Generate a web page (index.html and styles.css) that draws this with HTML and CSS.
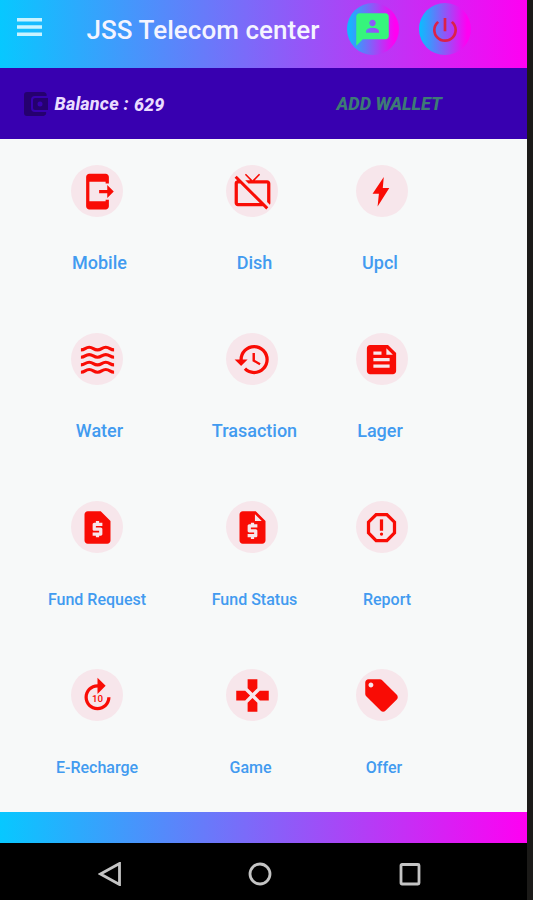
FILE: index.html
```html
<!DOCTYPE html>
<html lang="en">
<head>
    <meta charset="UTF-8">
    <meta name="viewport" content="width=device-width, initial-scale=1.0">
    <title>JSS Telecom center</title>
    <link rel="stylesheet" href="styles.css">
</head>
<body>
    <div class="screen">
        <header class="app-bar">
            <svg class="menu-icon" viewBox="0 0 25 20"><path d="M0 1h25v3.500H0zM0 8.200h25v3.500H0zM0 15.500h25v3.500H0z"/></svg>
            <h1 class="app-title">JSS Telecom center</h1>
            <a class="round-btn contact" href="#">
                <svg viewBox="0 0 24 24"><path d="M20 2H4.01c-1.1 0-2 .9-2 2L2 22l4-4h14c1.1 0 2-.9 2-2V4c0-1.1-.9-2-2-2zm-8 4c1.1 0 2 .9 2 2s-.9 2-2 2-2-.9-2-2 .9-2 2-2zm4 8H8v-.57c0-.81.48-1.53 1.22-1.85a6.95 6.95 0 0 1 5.56 0A2.01 2.01 0 0 1 16 13.43V14z"/></svg>
            </a>
            <a class="round-btn power" href="#">
                <svg viewBox="0 0 24 24"><path d="M13 3h-2v10h2V3zm4.83 2.17-1.42 1.42A6.92 6.92 0 0 1 19 12a7 7 0 1 1-11.42-5.42L6.17 5.17A8.932 8.932 0 0 0 3 12a9 9 0 0 0 18 0c0-2.74-1.23-5.18-3.17-6.83z"/></svg>
            </a>
        </header>

        <div class="balance-bar">
            <svg class="wallet-icon" viewBox="0 0 24 24"><path d="M18 24H3a3 3 0 0 1-3-3V3a3 3 0 0 1 3-3h17a3 3 0 0 1 2.500 4H11a4 4 0 0 0-4 4v8a4 4 0 0 0 4 4h11a3 3 0 0 1-3 4zM11 6h13v12H11a2 2 0 0 1-2-2V8a2 2 0 0 1 2-2zm5 3.500a2.500 2.500 0 1 0 0 5 2.500 2.500 0 0 0 0-5z"/></svg>
            <span class="balance-label">Balance :</span>
            <span class="balance-value">629</span>
            <a class="add-wallet" href="#">ADD WALLET</a>
        </div>

        <main class="services">
            <div class="service">
                <div class="service-icon"><svg viewBox="0 0 24 24"><path d="M17 17h2v4c0 1.100-.9 2-2 2H7c-1.100 0-2-.9-2-2V3c0-1.100.9-2 2-2h10c1.100 0 2 .9 2 2v4h-2V6H7v12h10v-1zm5-5-4-4v3h-5v2h5v3l4-4z"/></svg></div>
                <span class="service-name nudge-4">Mobile</span>
            </div>
            <div class="service">
                <div class="service-icon"><svg viewBox="0 0 24 24"><path d="M1 3.540l1.530 1.530C1.650 5.280 1 6.060 1 7v12c0 1.100.9 2 2 2h15.460l2 2 1.260-1.270L2.270 2.270 1 3.540zM3 19V7h1.460l12 12H3zM21 5h-7.580l3.290-3.300L16 1l-4 4-4-4-.7.7L10.580 5H7.520l2 2H21v11.480l1.650 1.650c.22-.32.35-.71.35-1.130V7c0-1.110-.89-2-2-2z"/></svg></div>
                <span class="service-name nudge-4">Dish</span>
            </div>
            <div class="service">
                <div class="service-icon"><svg viewBox="0 0 24 24"><path d="M13.400 3 6.500 13.400h3.900L9.600 21.200l7.200-11.300h-4z"/></svg></div>
                <span class="service-name nudge-back">Upcl</span>
            </div>

            <div class="service">
                <div class="service-icon"><svg viewBox="0 0 24 24"><g class="waves"><path d="M1.800 6.100c2.600 0 2.600-1.600 5.100-1.600s2.600 1.600 5.100 1.600 2.600-1.600 5.100-1.600 2.600 1.600 5.100 1.600"/><path d="M1.800 10.600c2.600 0 2.600-1.600 5.100-1.600s2.600 1.600 5.100 1.600 2.600-1.600 5.100-1.600 2.600 1.600 5.100 1.600"/><path d="M1.800 15.300c2.600 0 2.600-1.600 5.100-1.600s2.600 1.600 5.100 1.600 2.600-1.600 5.100-1.600 2.600 1.600 5.100 1.600"/><path d="M1.800 19.800c2.600 0 2.600-1.600 5.100-1.600s2.600 1.600 5.100 1.600 2.600-1.600 5.100-1.600 2.600 1.600 5.100 1.600"/></g></svg></div>
                <span class="service-name nudge-4">Water</span>
            </div>
            <div class="service">
                <div class="service-icon"><svg viewBox="0 0 24 24"><path d="M13 3a9 9 0 0 0-9 9H1l3.890 3.890.07.14L9 12H6c0-3.870 3.130-7 7-7s7 3.130 7 7-3.130 7-7 7c-1.930 0-3.680-.79-4.940-2.060l-1.420 1.420A8.954 8.954 0 0 0 13 21a9 9 0 0 0 0-18zm-1 5v5l4.280 2.540.72-1.210-3.500-2.080V8H12z"/></svg></div>
                <span class="service-name nudge-4">Trasaction</span>
            </div>
            <div class="service">
                <div class="service-icon"><svg viewBox="0 0 24 24"><path d="M16 3H5c-1.100 0-2 .9-2 2v14c0 1.100.9 2 2 2h14c1.100 0 2-.9 2-2V8l-5-5zM7 7h5v2H7V7zm10 10H7v-2h10v2zm0-4H7v-2h10v2zm-2-4V5l4 4h-4z"/></svg></div>
                <span class="service-name nudge-back">Lager</span>
            </div>

            <div class="service">
                <div class="service-icon"><svg viewBox="0 0 24 24"><path d="M14 2H6c-1.100 0-1.990.9-1.990 2L4 20c0 1.100.89 2 1.990 2H18c1.100 0 2-.9 2-2V8l-6-6zm1 9h-4v1h3c.55 0 1 .45 1 1v3c0 .55-.45 1-1 1h-1v1h-2v-1H9v-2h4v-1h-3c-.55 0-1-.45-1-1v-3c0-.55.45-1 1-1h1V8h2v1h2v2z"/></svg></div>
                <span class="service-name small">Fund Request</span>
            </div>
            <div class="service">
                <div class="service-icon"><svg viewBox="0 0 24 24"><path d="M14 2H6C4.900 2 4 2.900 4 4v16c0 1.100.89 2 1.990 2H18c1.100 0 2-.9 2-2V8l-6-6zm1 10h-4v1h3c.55 0 1 .45 1 1v3c0 .55-.45 1-1 1h-1v1h-2v-1H9v-2h4v-1h-3c-.55 0-1-.45-1-1v-3c0-.55.45-1 1-1h1V9h2v1h2v2zm-1.500-4V3.800L17.700 8z"/></svg></div>
                <span class="service-name small nudge-4">Fund Status</span>
            </div>
            <div class="service">
                <div class="service-icon"><svg viewBox="0 0 24 24"><path d="M15.730 3H8.270L3 8.270v7.460L8.270 21h7.460L21 15.730V8.270L15.730 3zM19 14.900L14.900 19H9.100L5 14.900V9.100L9.100 5h5.800L19 9.100v5.800z"/><path d="M11 7h2v7h-2z"/><circle cx="12" cy="16" r="1"/></svg></div>
                <span class="service-name small nudge-11">Report</span>
            </div>

            <div class="service">
                <div class="service-icon"><svg viewBox="0 0 24 24"><path d="M18 13c0 3.310-2.690 6-6 6s-6-2.690-6-6 2.690-6 6-6v4l5-5-5-5v4c-4.420 0-8 3.580-8 8s3.580 8 8 8 8-3.580 8-8h-2z"/><text class="ten" x="12" y="15.800">10</text></svg></div>
                <span class="service-name small">E-Recharge</span>
            </div>
            <div class="service">
                <div class="service-icon"><svg viewBox="0 0 24 24"><path d="M15 7.500V2H9v5.500l3 3 3-3zM7.500 9H2v6h5.500l3-3-3-3zM9 16.500V22h6v-5.500l-3-3-3 3zM16.500 9l-3 3 3 3H22V9h-5.500z"/></svg></div>
                <span class="service-name small nudge-back">Game</span>
            </div>
            <div class="service">
                <div class="service-icon"><svg viewBox="0 0 24 24"><path d="M21.410 11.580l-9-9C12.050 2.220 11.550 2 11 2H4c-1.100 0-2 .9-2 2v7c0 .55.22 1.050.59 1.420l9 9c.36.36.86.58 1.410.58.55 0 1.050-.22 1.410-.59l7-7c.37-.36.59-.86.59-1.410 0-.55-.23-1.060-.59-1.420zM5.500 7C4.670 7 4 6.330 4 5.500S4.670 4 5.500 4 7 4.670 7 5.500 6.330 7 5.500 7z"/></svg></div>
                <span class="service-name small nudge-4">Offer</span>
            </div>
        </main>

        <div class="bottom-strip"></div>

        <!-- Android navigation buttons -->
        <nav class="nav-bar">
            <svg viewBox="0 0 24 24"><path d="M21.500 1.500v21L2.500 12z"/></svg>
            <svg viewBox="0 0 24 24"><circle cx="12" cy="12" r="10"/></svg>
            <svg viewBox="0 0 24 24"><rect x="3" y="2.500" width="18" height="19.500" rx="1"/></svg>
        </nav>
    </div>
</body>
</html>
```

FILE: styles.css
```css
* {
    box-sizing: border-box;
}

body {
    margin: 0;
    height: 900px;
    overflow: hidden;
    background: #1b1a18;
    font-family: Roboto, sans-serif;
}

a {
    text-decoration: none;
}

.screen {
    display: flex;
    flex-direction: column;
    width: 527px;
    height: 900px;
    background: #f7f9f9;
}

/* Top bar */
.app-bar {
    display: flex;
    align-items: center;
    height: 68px;
    padding: 0 0 10px 17px;
    background: linear-gradient(90deg, #07c8ff, #ff00f2);
}

.menu-icon {
    width: 25px;
    height: 20px;
    margin-top: -5px;
    fill: #c9f3ff;
}

.app-title {
    width: 260px;
    margin: 2px 0 0 44.5px;
    font-size: 26px;
    font-weight: 500;
    letter-spacing: 0.05px;
    color: #f4f4ff;
    white-space: nowrap;
}

.round-btn {
    display: flex;
    align-items: center;
    justify-content: center;
    width: 52px;
    height: 52px;
    border-radius: 50%;
    background: linear-gradient(90deg, #07c0ff, #ff00f2 92%);
}

.contact svg {
    width: 39px;
    height: 39px;
    fill: #36f57c;
}

.power {
    margin-left: 20px;
}

.power svg {
    width: 32px;
    height: 32px;
    margin-top: 2px;
    fill: #db2148;
}

/* Wallet balance */
.balance-bar {
    display: flex;
    align-items: center;
    height: 71px;
    padding-left: 24px;
    background: #3800b0;
    font-size: 18px;
    font-weight: 800;
    font-style: italic;
    white-space: nowrap;
}

.wallet-icon {
    width: 24px;
    height: 24px;
    fill: #25006f;
}

.balance-label {
    width: 79.5px;
    margin-left: 6.5px;
    letter-spacing: 0.2px;
    color: #eadcff;
}

.balance-value {
    width: 202.5px;
    margin-top: 1px;
    color: #eadcff;
}

.add-wallet {
    color: #3d7b75;
}

/* Services grid */
.services {
    display: grid;
    grid-template-columns: 155px 155px 104px;
    grid-template-rows: repeat(4, 168px);
    height: 673px;
    padding-left: 19.5px;
}

.service {
    display: flex;
    flex-direction: column;
    align-items: center;
    padding-top: 26px;
}

.service-icon {
    display: flex;
    align-items: center;
    justify-content: center;
    width: 52px;
    height: 52px;
    border-radius: 50%;
    background: #f7e6eb;
}

.service-icon svg {
    width: 39px;
    height: 39px;
    fill: #f90c05;
}

.waves {
    fill: none;
    stroke: #f90c05;
    stroke-width: 1.9;
}

.ten {
    font-size: 6px;
    font-weight: 500;
    text-anchor: middle;
}

.service-name {
    margin-top: 36px;
    font-size: 18px;
    line-height: 20px;
    font-weight: 500;
    color: #429bf0;
    white-space: nowrap;
}

.service-name.small {
    margin-top: 37px;
    font-size: 16px;
}

/* labels sit slightly off the icon centre */
.nudge-4 {
    margin-left: 5px;
}

.nudge-11 {
    margin-left: 11px;
}

.nudge-back {
    margin-right: 3px;
}

/* Bottom */
.bottom-strip {
    height: 31px;
    background: linear-gradient(90deg, #07c8ff, #ff00f2);
}

.nav-bar {
    display: flex;
    flex: 1;
    align-items: center;
    gap: 126px;
    padding: 4px 0 0 97.5px;
    background: #000;
}

.nav-bar svg {
    width: 24px;
    height: 24px;
    fill: none;
    stroke: #c4c4c4;
    stroke-width: 2.8;
}
```
